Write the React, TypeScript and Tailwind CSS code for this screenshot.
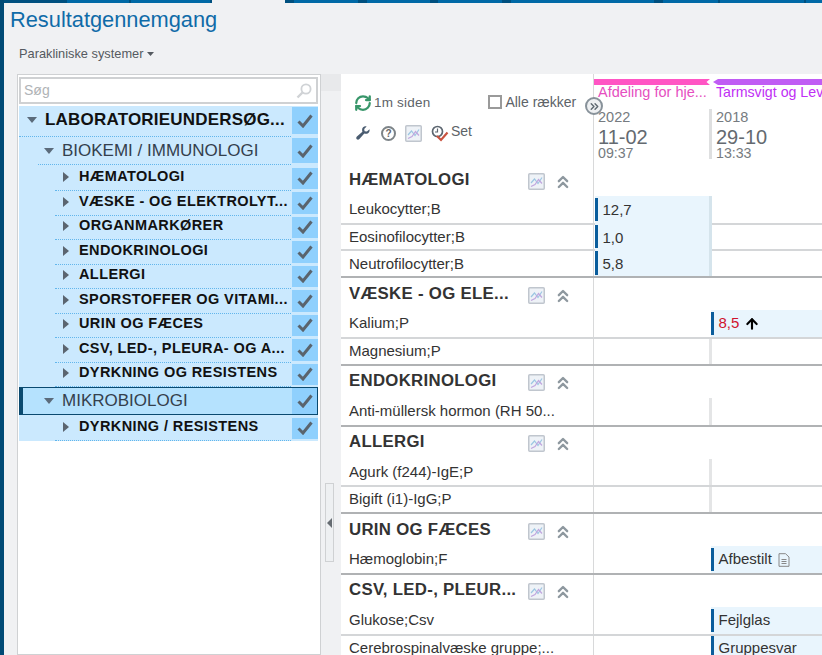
import { RefreshCw, ChevronsUp, ChevronsRight, ArrowUp } from 'lucide-react'

const font = { fontFamily: '"Liberation Sans", Arial, sans-serif' }

const topSegments = [
  'w-[63px] bg-[#00507f]',
  'w-[62px] bg-[#0069a6]',
  'w-[2px] bg-[#00507f]',
  'w-[79px] bg-[#0069a6]',
  'w-[2px] bg-[#00507f]',
  'w-[73px]',
  'w-[9px] bg-[#00507f]',
  'w-[64px] bg-[#0069a6]',
  'w-[9px] bg-[#00507f]',
  'w-[63px] bg-[#0069a6]',
  'w-[8px] bg-[#00507f]',
  'w-[64px] bg-[#0069a6]',
  'w-[9px] bg-[#00507f]',
  'w-[143px] bg-[#0069a6]',
  'w-[9px] bg-[#00507f]',
  'w-[55px] bg-[#0069a6]',
  'w-[2px] bg-[#00507f]',
  'w-[84px] bg-[#0069a6]',
  'w-[2px] bg-[#00507f]',
  'flex-1 bg-[#0069a6]',
]

function ChartIcon() {
  return (
    <svg width="17" height="17" viewBox="0 0 17 17" className="shrink-0">
      <rect x="0.75" y="0.75" width="15.5" height="15.5" rx="1" fill="#eef2f7" stroke="#c0c6ce" strokeWidth="1.5" />
      <path d="M3 10 L6.5 6 L10 10.5 L14 4.5" fill="none" stroke="#9cc6e2" strokeWidth="1.2" />
      <path d="M3 13.5 L7 11.5 L10.5 6.5 L14 10.5" fill="none" stroke="#c0a6de" strokeWidth="1.2" />
    </svg>
  )
}

function Caret({ open }: { open: boolean }) {
  if (open) {
    return (
      <svg width="10" height="6" viewBox="0 0 10 6" className="shrink-0">
        <path d="M0 0 H10 L5 6 Z" fill="#5b6b7b" />
      </svg>
    )
  }
  return (
    <svg width="6" height="10" viewBox="0 0 6 10" className="shrink-0">
      <path d="M0 0 L6 5 L0 10 Z" fill="#5b6570" />
    </svg>
  )
}

function CheckBox({ h }: { h: string }) {
  return (
    <div className={`w-[26px] shrink-0 bg-[#8fd0fd] flex items-center justify-center ${h}`}>
      <svg width="16" height="14" viewBox="0 0 16 14">
        <path d="M1.5 7.5 L6 12 L14.5 1.5" fill="none" stroke="#5a646d" strokeWidth="3" />
      </svg>
    </div>
  )
}

const subItems = [
  'HÆMATOLOGI',
  'VÆSKE - OG ELEKTROLYT...',
  'ORGANMARKØRER',
  'ENDOKRINOLOGI',
  'ALLERGI',
  'SPORSTOFFER OG VITAMI...',
  'URIN OG FÆCES',
  'CSV, LED-, PLEURA- OG A...',
  'DYRKNING OG RESISTENS',
]

function SubRow({ label }: { label: string }) {
  return (
    <div className="flex h-[24.5px] bg-[#cbe9fe]">
      <div className="flex-1 min-w-0 ml-[36px] pl-[8px] pb-[2px] flex items-center border-b border-dotted border-[#62b6ec]">
        <Caret open={false} />
        <span className="ml-[10px] text-[14.5px] font-bold text-[#111] tracking-[0.4px] whitespace-nowrap">{label}</span>
      </div>
      <div className="w-px" />
      <div className="pt-[1px]">
        <CheckBox h="h-[21.5px]" />
      </div>
    </div>
  )
}

function MidRow({ label, selected }: { label: string; selected?: boolean }) {
  return (
    <div className="bg-[#cbe9fe] pb-[1.5px]">
      <div className={`flex relative h-[28px] ${selected ? 'bg-[#b5e2fe] outline outline-1 -outline-offset-1 outline-[#0a4a70]' : ''}`}>
        {selected && <div className="absolute left-0 top-0 bottom-0 w-[4px] bg-[#0a4a70]" />}
        <div className={`flex-1 min-w-0 ml-[19px] pl-[6px] flex items-center ${selected ? 'pb-[1px]' : 'border-b border-dotted border-[#62b6ec]'}`}>
          <Caret open />
          <span className="ml-[8px] text-[17px] text-[#34404d] whitespace-nowrap">{label}</span>
        </div>
        <div className="w-px" />
        <div className="pt-[1px]">
          <CheckBox h={selected ? 'h-[26px]' : 'h-[25px]'} />
        </div>
      </div>
    </div>
  )
}

function Tree() {
  return (
    <div className="w-[304px] shrink-0 bg-white border border-[#cfd1d3] pl-[1px] pr-[2px] pt-[2px]">
      <div className="h-[27px] border-2 border-[#cfd1d3] bg-white flex items-center justify-between pl-[3px] pr-[4px]">
        <span className="text-[14px] text-[#b0b3b6]">Søg</span>
        <svg width="16" height="16" viewBox="0 0 16 16">
          <circle cx="10" cy="6" r="4.6" fill="none" stroke="#d0d3d6" strokeWidth="1.8" />
          <path d="M6.5 9.5 L1.5 14.5" stroke="#d0d3d6" strokeWidth="2.4" />
        </svg>
      </div>
      <div className="mt-[2px] flex h-[31px] bg-[#cbe9fe]">
        <div className="flex-1 min-w-0 pl-[8px] pb-[3px] flex items-center border-b border-dotted border-[#62b6ec]">
          <Caret open />
          <span className="ml-[8px] text-[17px] font-bold text-[#111] tracking-[0.2px] whitespace-nowrap">LABORATORIEUNDERSØG...</span>
        </div>
        <div className="w-px" />
        <div className="pt-[1px]">
          <CheckBox h="h-[27px]" />
        </div>
      </div>
      <MidRow label="BIOKEMI / IMMUNOLOGI" />
      {subItems.map((s) => (
        <SubRow key={s} label={s} />
      ))}
      <MidRow label="MIKROBIOLOGI" selected />
      <SubRow label="DYRKNING / RESISTENS" />
    </div>
  )
}

function ColHeader({ year, date, time, divider }: { year: string; date: string; time: string; divider?: boolean }) {
  return (
    <div className={`flex flex-col h-[50px] mt-[8px] pl-[4px] text-[#767b80] leading-none ${divider ? 'border-r-[3px] border-[#dedfe0]' : ''}`}>
      <span className="text-[14.5px] mt-[1px]">{year}</span>
      <span className="text-[20px] mt-[2px] text-[#646a70]">{date}</span>
      <span className="text-[14.2px] -mt-[1px]">{time}</span>
    </div>
  )
}

type Cell = { text: string; red?: boolean; arrow?: boolean; doc?: boolean }
type Row = { name: string; a?: Cell; b?: Cell; last?: boolean }

function DataCell({ cell, first }: { cell: Cell; first: boolean }) {
  return (
    <div className="flex h-full bg-[#e9f5fd]">
      <div className={`w-[3px] h-[23.5px] shrink-0 bg-[#0a5d9c] ${first ? 'mt-[1.5px]' : ''}`} />
      <div className="flex items-center pl-[4.5px] text-[15px]">
        <span className={cell.red ? 'text-[#d0122c]' : 'text-[#333]'}>{cell.text}</span>
        {cell.arrow && <ArrowUp size={16} strokeWidth={3.2} className="ml-[5px] text-black" />}
        {cell.doc && (
          <svg width="12" height="14" viewBox="0 0 12 14" className="ml-[6px]">
            <path d="M1 .7 H7.5 L11 4 V13.3 H1 Z" fill="none" stroke="#888" />
            <path d="M3.5 6.5 H8.5 M3.5 8.5 H8.5 M3.5 10.5 H8.5" stroke="#888" />
          </svg>
        )}
      </div>
    </div>
  )
}

function ResultRow({ row, first, showDivider }: { row: Row; first: boolean; showDivider: boolean }) {
  const height = first ? 'h-[28.5px]' : 'h-[26.9px]'
  const line = row.last ? 'border-[#b0b2b4]' : 'border-[#d4d6d8]'
  return (
    <div className={`flex border-b-2 ${height} ${line}`}>
      <div className="w-[253px] shrink-0 pl-[8px] flex items-center border-r border-[#d8d9da] text-[15px] text-[#333] whitespace-nowrap">
        {row.name}
      </div>
      <div className="w-[118px] shrink-0">
        {row.a && (
          <div className={`pl-[1px] ${row.last ? 'h-full' : 'h-[calc(100%+2px)]'}`}>
            <div className="h-full border-r-[3px] border-[#d5e4ec]">
              <DataCell cell={row.a} first={first} />
            </div>
          </div>
        )}
        {!row.a && <div className={`h-full ${showDivider && !row.b ? 'border-r-[3px] border-[#e4e5e6]' : ''}`} />}
      </div>
      <div className="flex-1 min-w-0 -ml-[1px]">{row.b && <DataCell cell={row.b} first={first} />}</div>
    </div>
  )
}

function Group({ title, rows, first }: { title: string; rows: Row[]; first?: boolean }) {
  return (
    <div>
      <div className={`flex ${first ? 'h-[33px]' : 'h-[32.2px]'}`}>
        <div className={`w-[253px] shrink-0 border-r border-[#d8d9da] flex items-center pl-[8px] ${first ? 'pt-[1px]' : ''}`}>
          <span className={`w-[172px] text-[16.8px] font-bold text-[#333] tracking-[0.3px] whitespace-nowrap ${first ? '' : '-mt-[2px]'}`}>{title}</span>
          <div className="ml-[7px] mt-[2px]">
            <ChartIcon />
          </div>
          <ChevronsUp size={20} strokeWidth={2.8} className="ml-[8px] mt-[3px] text-[#8e989f]" />
        </div>
      </div>
      {rows.map((r, i) => (
        <ResultRow key={r.name} row={r} first={i === 0} showDivider={!first} />
      ))}
    </div>
  )
}

function Results() {
  return (
    <div className="flex-1 min-w-0 bg-white overflow-hidden">
      {/* toolbar and column heads */}
      <div className="flex h-[89px]">
        <div className="w-[253px] shrink-0 border-r border-[#d8d9da] relative text-[#5d6368]">
          <div className="flex items-center pl-[13px] pt-[19px]">
            <RefreshCw size={18} strokeWidth={3} className="text-[#38966a]" />
            <span className="ml-[2px] text-[13.5px] tracking-[0.2px]">1m siden</span>
            <div className="ml-[58px] -mt-[2px] w-[14px] h-[14px] border-2 border-[#9a9a9a] bg-white" />
            <span className="ml-[3px] -mt-[2px] text-[14px]">Alle rækker</span>
          </div>
          <div className="flex items-center pl-[15px] mt-[11px]">
            <svg width="14" height="14" viewBox="0 0 14 14" className="shrink-0">
              <path d="M13.5 3.2 L10.9 5.6 L8.6 5.2 L8.2 2.9 L10.6 .5 C8.3 -.2 5.9 1.5 6.1 4 C6.1 4.7 6.2 5.2 6.4 5.7 L.9 10.6 C-.1 11.6 .2 12.7 .8 13.2 C1.5 13.9 2.6 13.9 3.4 13 L8.3 7.6 C11 8.6 14.3 6.4 13.5 3.2 Z" fill="#4a5c70" />
            </svg>
            <div className="ml-[11px] w-[15px] h-[15px] rounded-full border-2 border-[#7d8488] flex items-center justify-center text-[10px] font-bold text-[#666]">?</div>
            <div className="ml-[9px]">
              <ChartIcon />
            </div>
            <svg width="18" height="17" viewBox="0 0 18 17" className="ml-[9px]">
              <circle cx="6.5" cy="6.5" r="5" fill="none" stroke="#5c6670" strokeWidth="1.7" />
              <path d="M6.5 3.5 V7 H4" fill="none" stroke="#5c6670" strokeWidth="1.2" />
              <path d="M6 11 L10 15 L16.5 7.5" fill="none" stroke="#c9523f" strokeWidth="2.2" />
            </svg>
            <span className="ml-[2px] -mt-[3px] text-[14px]">Set</span>
          </div>
          <div className="absolute right-[-10px] top-[23px] z-10 w-[18px] h-[18px] rounded-full bg-[#eef0f2] border-2 border-[#88929a] flex items-center justify-center">
            <ChevronsRight size={13} strokeWidth={2.6} className="text-[#5e6870]" />
          </div>
        </div>
        <div className="w-[118px] shrink-0 pt-[5px]">
          <div className="h-[6px] mr-[2px] bg-[#ff55c4] [clip-path:polygon(0_0,100%_0,97%_50%,100%_100%,0_100%)]" />
          <div className="pl-[4px] h-[17px] -mt-[1px] text-[14.5px] leading-[17px] text-[#e64fbf] whitespace-nowrap">Afdeling for hje...</div>
          <ColHeader year="2022" date="11-02" time="09:37" divider />
        </div>
        <div className="flex-1 min-w-0 pt-[5px] overflow-hidden">
          <div className="h-[6px] ml-[1px] bg-[#c05cf4] [clip-path:polygon(0_50%,5px_0,100%_0,100%_100%,5px_100%)]" />
          <div className="pl-[4px] h-[17px] -mt-[1px] text-[14.2px] leading-[17px] text-[#c030f5] whitespace-nowrap">Tarmsvigt og Lev</div>
          <ColHeader year="2018" date="29-10" time="13:33" />
        </div>
      </div>
      <Group
        first
        title="HÆMATOLOGI"
        rows={[
          { name: 'Leukocytter;B', a: { text: '12,7' } },
          { name: 'Eosinofilocytter;B', a: { text: '1,0' } },
          { name: 'Neutrofilocytter;B', a: { text: '5,8' }, last: true },
        ]}
      />
      <Group
        title="VÆSKE - OG ELE..."
        rows={[
          { name: 'Kalium;P', b: { text: '8,5', red: true, arrow: true } },
          { name: 'Magnesium;P', last: true },
        ]}
      />
      <Group title="ENDOKRINOLOGI" rows={[{ name: 'Anti-müllersk hormon (RH 50...', last: true }]} />
      <Group
        title="ALLERGI"
        rows={[
          { name: 'Agurk (f244)-IgE;P' },
          { name: 'Bigift (i1)-IgG;P', last: true },
        ]}
      />
      <Group title="URIN OG FÆCES" rows={[{ name: 'Hæmoglobin;F', b: { text: 'Afbestilt', doc: true }, last: true }]} />
      <Group
        title="CSV, LED-, PLEUR..."
        rows={[
          { name: 'Glukose;Csv', b: { text: 'Fejlglas' } },
          { name: 'Cerebrospinalvæske gruppe;...', b: { text: 'Gruppesvar' } },
        ]}
      />
    </div>
  )
}

export default function App() {
  return (
    <div style={font} className="h-[655px] w-[822px] overflow-hidden bg-[#f0f1f3] flex">
      <div className="w-[4px] shrink-0 bg-[#004a75]" />
      <div className="flex-1 min-w-0 flex flex-col">
        <div className="h-[3px] shrink-0 flex">
          {topSegments.map((c, i) => (
            <div key={i} className={c} />
          ))}
        </div>
        <div className="pl-[6px] pt-[4px] h-[33px] text-[21.8px] leading-[26px] text-[#0f6ba8] shrink-0">Resultatgennemgang</div>
        <div className="pl-[15px] pt-[10px] h-[38px] flex items-start text-[12.8px] text-[#555a60] shrink-0">
          <span className="leading-[16px]">Parakliniske systemer</span>
          <svg width="7" height="4" viewBox="0 0 7 4" className="ml-[4px] mt-[6px]">
            <path d="M0 0 H7 L3.5 4 Z" fill="#555a60" />
          </svg>
        </div>
        <div className="flex-1 min-h-0 flex pl-[13px]">
          <Tree />
          <div className="w-[20px] shrink-0 flex flex-col">
            <div className="h-[17px] bg-[#e8e9eb]" />
            <div className="ml-[4px] mt-[392px] w-[9px] h-[79px] bg-[#eef0f2] border border-[#cfd1d3] flex items-center justify-center">
              <div className="w-0 h-0 border-y-[5px] border-y-transparent border-r-[5px] border-r-[#666c72]" />
            </div>
          </div>
          <Results />
        </div>
      </div>
    </div>
  )
}
